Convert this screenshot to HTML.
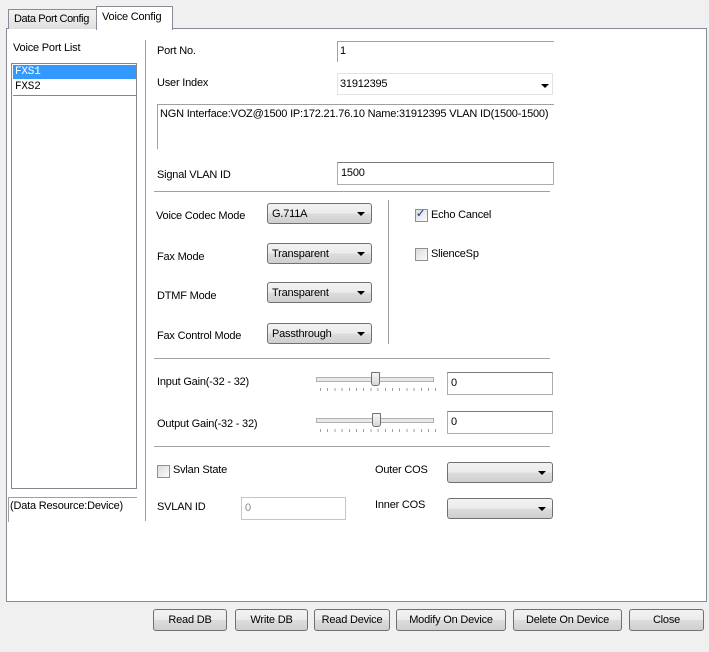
<!DOCTYPE html>
<html><head><style>
body{margin:0;width:709px;height:652px;background:#f0f0f0;font-family:"Liberation Sans",sans-serif;font-size:11px;letter-spacing:-0.2px;color:#000;position:relative;overflow:hidden}
.a{position:absolute;white-space:nowrap}
.panel{position:absolute;left:6px;top:28px;width:699px;height:572px;background:#fff;border:1px solid #898c95}
.tab{position:absolute;border:1px solid #898c95;border-bottom:none}
.edit{position:absolute;background:#fff;border:1px solid #abadb3;border-top-color:#7a7a7a;box-sizing:border-box;padding:4px 3px 0;font-size:11px}
.combo{position:absolute;box-sizing:border-box;border:1px solid #707070;border-radius:3px;background:linear-gradient(#f2f2f2,#ebebeb 50%,#dddddd 50%,#cfcfcf);padding:4px 4px 0;font-size:11px}
.arrow{position:absolute;right:6px;top:50%;margin-top:-2px;width:0;height:0;border-left:4px solid transparent;border-right:4px solid transparent;border-top:4px solid #000}
.btn{position:absolute;top:609px;height:22px;box-sizing:border-box;border:1px solid #707070;border-radius:3px;background:linear-gradient(#f2f2f2,#ebebeb 50%,#dddddd 50%,#cfcfcf);text-align:center;line-height:20px;font-size:11px}
.hr{position:absolute;height:1px;background:#a0a0a0}
.cb{position:absolute;width:11px;height:11px;border:1px solid #8e8f8f;background:linear-gradient(135deg,#dcdcdc,#fbfbfb)}
.track{position:absolute;height:3px;border:1px solid #b0b0b0;background:#e7eaea;width:116px}
.thumb{position:absolute;width:7px;height:12px;border:1px solid #707070;border-radius:1px 1px 3px 3px;background:linear-gradient(#f6f6f6,#d8d8d8)}
.ticks{position:absolute;height:3px;width:116px;background:repeating-linear-gradient(90deg,#a0a0a0 0 1px,transparent 1px 7.2px)}
</style></head><body>
<div class="panel"></div>
<div class="tab" style="left:8px;top:9px;width:87px;height:19px;background:linear-gradient(#f2f2f2,#e0e0e0)"></div>
<div class="a" style="left:14px;top:13px;letter-spacing:-0.4px">Data Port Config</div>
<div class="tab" style="left:96px;top:6px;width:75px;height:23px;background:#fff"></div>
<div class="a" style="left:102px;top:11px">Voice Config</div>

<div class="a" style="left:13px;top:42px">Voice Port List</div>
<div style="position:absolute;left:11px;top:63px;width:124px;height:424px;border:1px solid #828790;background:#fff"></div>
<div style="position:absolute;left:13px;top:65px;width:123px;height:14px;background:#3399ff"></div>
<div class="a" style="left:15px;top:66px;color:#fff;font-family:'Liberation Mono',monospace;font-size:11px">FXS1</div>
<div style="position:absolute;left:13px;top:80px;width:123px;height:15px;border-bottom:1px solid #828790"></div>
<div class="a" style="left:15px;top:81px;font-family:'Liberation Mono',monospace;font-size:11px">FXS2</div>
<div style="position:absolute;left:8px;top:497px;width:128px;height:24px;border-top:1px solid #a0a0a0;border-left:1px solid #a0a0a0"></div>
<div class="a" style="left:10px;top:500px">(Data Resource:Device)</div>
<div style="position:absolute;left:145px;top:40px;width:1px;height:481px;background:#a0a0a0"></div>

<div class="a" style="left:157px;top:45px">Port No.</div>
<div style="position:absolute;left:337px;top:41px;width:216px;height:20px;border-top:1px solid #a0a0a0;border-left:1px solid #a0a0a0"></div>
<div class="a" style="left:340px;top:45px">1</div>
<div class="a" style="left:157px;top:77px">User Index</div>
<div style="position:absolute;left:337px;top:73px;width:216px;height:22px;background:#fff;border:1px solid #e3e3e3;box-sizing:border-box"></div>
<div class="a" style="left:340px;top:78px">31912395</div>
<div class="arrow" style="left:541px;top:84px;right:auto;margin:0"></div>
<div style="position:absolute;left:157px;top:104px;width:396px;height:44px;border-top:1px solid #a0a0a0;border-left:1px solid #a0a0a0"></div>
<div class="a" style="left:160px;top:108px">NGN Interface:VOZ@1500 IP:172.21.76.10 Name:31912395 VLAN ID(1500-1500)</div>
<div class="a" style="left:157px;top:169px">Signal VLAN ID</div>
<div class="edit" style="left:337px;top:162px;width:217px;height:23px">1500</div>
<div class="hr" style="left:154px;top:191px;width:396px"></div>

<div class="a" style="left:156px;top:210px">Voice Codec Mode</div>
<div class="combo" style="left:267px;top:203px;width:105px;height:21px">G.711A<div class="arrow"></div></div>
<div class="a" style="left:157px;top:251px">Fax Mode</div>
<div class="combo" style="left:267px;top:243px;width:105px;height:21px">Transparent<div class="arrow"></div></div>
<div class="a" style="left:157px;top:290px">DTMF Mode</div>
<div class="combo" style="left:267px;top:282px;width:105px;height:21px">Transparent<div class="arrow"></div></div>
<div class="a" style="left:157px;top:330px">Fax Control Mode</div>
<div class="combo" style="left:267px;top:323px;width:105px;height:21px">Passthrough<div class="arrow"></div></div>
<div style="position:absolute;left:388px;top:200px;width:1px;height:144px;background:#a0a0a0"></div>
<div class="cb" style="left:415px;top:209px"></div>
<div class="a" style="left:416px;top:207px;color:#3a5ea8;font-size:11px;font-weight:bold">✓</div>
<div class="a" style="left:431px;top:209px">Echo Cancel</div>
<div class="cb" style="left:415px;top:248px"></div>
<div class="a" style="left:431px;top:248px">SlienceSp</div>
<div class="hr" style="left:154px;top:358px;width:396px"></div>

<div class="a" style="left:157px;top:376px">Input Gain(-32 - 32)</div>
<div class="track" style="left:316px;top:377px"></div>
<div class="thumb" style="left:371px;top:372px"></div>
<div class="ticks" style="left:320px;top:388px"></div>
<div class="edit" style="left:447px;top:372px;width:106px;height:23px">0</div>
<div class="a" style="left:157px;top:418px">Output Gain(-32 - 32)</div>
<div class="track" style="left:316px;top:418px"></div>
<div class="thumb" style="left:372px;top:413px"></div>
<div class="ticks" style="left:320px;top:429px"></div>
<div class="edit" style="left:447px;top:411px;width:106px;height:23px">0</div>
<div class="hr" style="left:154px;top:446px;width:396px"></div>

<div class="cb" style="left:157px;top:465px"></div>
<div class="a" style="left:173px;top:464px">Svlan State</div>
<div class="a" style="left:375px;top:464px">Outer COS</div>
<div class="combo" style="left:447px;top:462px;width:106px;height:21px"><div class="arrow"></div></div>
<div class="a" style="left:157px;top:501px">SVLAN ID</div>
<div class="edit" style="left:241px;top:497px;width:105px;height:23px;color:#888;border-color:#c5c5c5">0</div>
<div class="a" style="left:375px;top:499px">Inner COS</div>
<div class="combo" style="left:447px;top:498px;width:106px;height:21px"><div class="arrow"></div></div>

<div class="btn" style="left:153px;width:74px">Read DB</div>
<div class="btn" style="left:235px;width:73px">Write DB</div>
<div class="btn" style="left:314px;width:76px">Read Device</div>
<div class="btn" style="left:396px;width:110px">Modify On Device</div>
<div class="btn" style="left:513px;width:109px">Delete On Device</div>
<div class="btn" style="left:629px;width:75px">Close</div>
</body></html>
